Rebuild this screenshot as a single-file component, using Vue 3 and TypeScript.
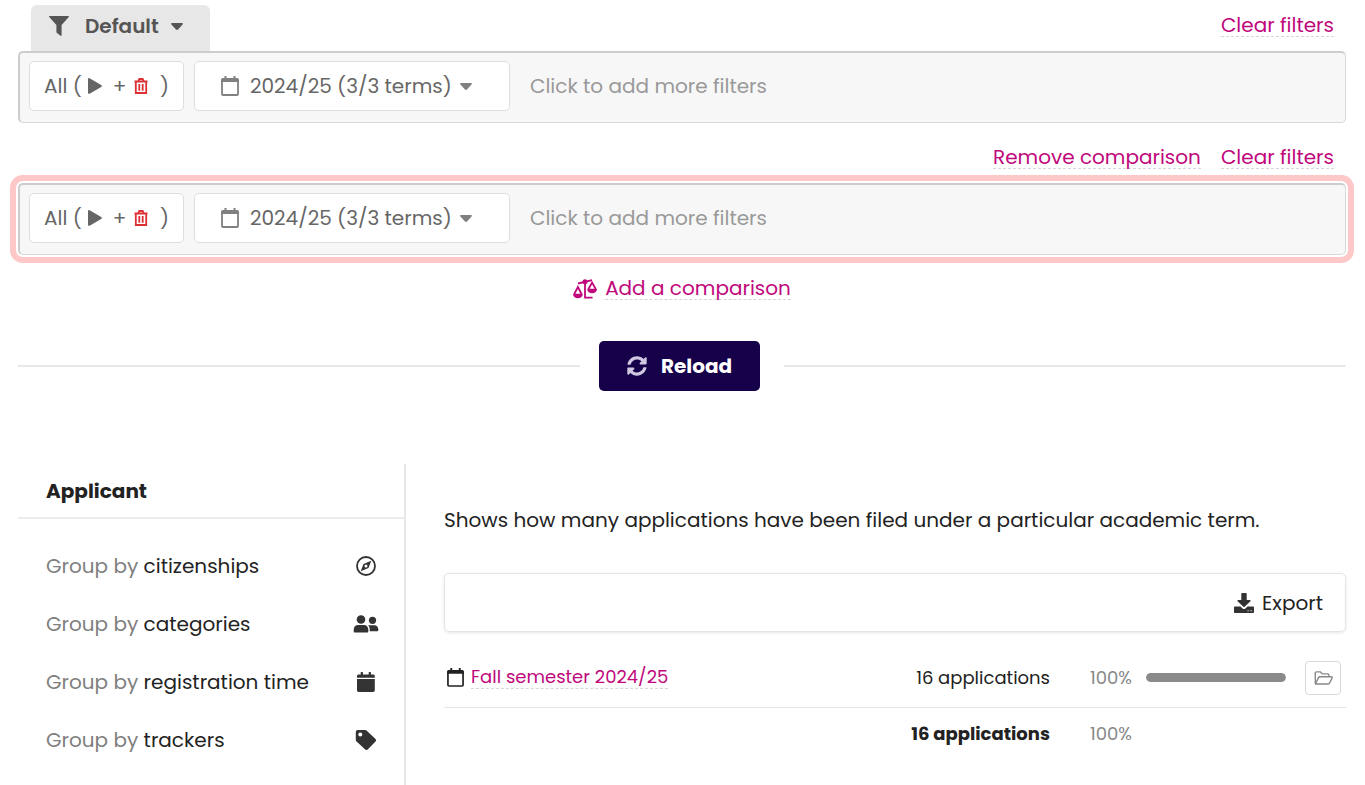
<script setup lang="ts">
import { ref } from 'vue'

interface FilterSet {
  id: string
  named: boolean
  highlighted: boolean
}

interface GroupOption {
  label: string
  icon: 'compass' | 'people' | 'calendar' | 'tag'
}

interface TermRow {
  term: string
  count: number
  share: number
}

const filterSets: FilterSet[] = [
  { id: 'base', named: true, highlighted: false },
  { id: 'comparison', named: false, highlighted: true },
]

const groups: GroupOption[] = [
  { label: 'citizenships', icon: 'compass' },
  { label: 'categories', icon: 'people' },
  { label: 'registration time', icon: 'calendar' },
  { label: 'trackers', icon: 'tag' },
]

const rows: TermRow[] = [{ term: 'Fall semester 2024/25', count: 16, share: 100 }]
const total = rows.reduce((sum, row) => sum + row.count, 0)
const terms = ref('2024/25 (3/3 terms)')
</script>

<template>
  <main class="page">
    <section
      v-for="set in filterSets"
      :key="set.id"
      class="filter-set"
    >
      <header class="filter-head">
        <button v-if="set.named" type="button" class="tab">
          <svg class="funnel" viewBox="0 0 20 20" aria-hidden="true">
            <path d="M.6 0h18.8c.6 0 .8.6.4 1L12.600 9v10.200c0 .7-.5 1-1 .6l-3.600-2.700c-.4-.3-.6-.6-.6-1.100V9L.2 1C-.2.6 0 0 .6 0z" />
          </svg>
          <span>Default</span>
          <svg class="caret" viewBox="0 0 12 7" aria-hidden="true"><path d="M1 0h10c.9 0 1.200.9.600 1.500L7 6.500c-.6.6-1.400.6-2 0L.4 1.500C-.2.9.1 0 1 0z" /></svg>
        </button>
        <nav class="head-links">
          <a v-if="!set.named" href="#" class="link">Remove comparison</a>
          <a href="#" class="link">Clear filters</a>
        </nav>
      </header>

      <div class="filter-bar" :class="{ highlighted: set.highlighted }">
        <button type="button" class="chip all-chip">
          <span>All (</span>
          <svg class="play" viewBox="0 0 14 16" aria-hidden="true"><path d="M0 1.200C0 .3.8-.2 1.600.2l11.600 6.700c.9.500.9 1.700 0 2.200L1.600 15.800C.8 16.200 0 15.700 0 14.800z" /></svg>
          <span class="plus">+</span>
          <svg class="trash" viewBox="0 0 14 16" aria-hidden="true">
            <path d="M.5 3.500h13M4.300 3.200 5.300 1h3.400l1 2.200M1.800 3.500V15h10.400V3.500M5.300 6v6.700M8.700 6v6.700" />
          </svg>
          <span>)</span>
        </button>
        <label class="chip term-chip">
          <svg class="cal-outline" viewBox="0 0 18 20" aria-hidden="true">
            <rect x="1" y="3" width="16" height="16" rx="1" class="stroke" />
            <path d="M.2 4.500C.2 3 1 2.200 2.200 2.200h13.600c1.200 0 2 .8 2 2.300V6H.2zM3.500 0h2v3h-2zM12.500 0h2v3h-2z" />
          </svg>
          <select v-model="terms" aria-label="Academic year">
            <option>2024/25 (3/3 terms)</option>
          </select>
          <svg class="caret" viewBox="0 0 12 7" aria-hidden="true"><path d="M1 0h10c.9 0 1.200.9.600 1.500L7 6.500c-.6.6-1.400.6-2 0L.4 1.500C-.2.9.1 0 1 0z" /></svg>
        </label>
        <input class="add-filter" type="text" aria-label="Add filter" placeholder="Click to add more filters" />
      </div>
    </section>

    <div class="add-row">
      <a href="#" class="add-link">
        <svg class="scales" viewBox="0 0 24 20" aria-hidden="true">
          <path d="M5 4.500 19 1.200M12 3V18.700H19.500M1.300 15 4.900 8 8.500 15M15.500 10 19.100 3.500 22.700 10" class="stroke" />
          <circle cx="12" cy="2.700" r="2.500" />
          <path d="M0 14.800h9.800c0 2.900-2 4.500-4.900 4.500S0 17.700 0 14.800zM14.200 9.800h9.800c0 2.900-2 4.500-4.900 4.500s-4.900-1.600-4.900-4.500z" />
        </svg>
        <span class="link">Add a comparison</span>
      </a>
    </div>

    <div class="reload-row">
      <hr />
      <button type="button" class="reload">
        <svg viewBox="0 0 512 512" aria-hidden="true">
          <path d="M370.700 133.300C339.500 104 298.900 88 255.800 88c-77.500.1-144.300 53.200-162.800 126.900-1.300 5.400-6.100 9.100-11.700 9.100H24.100c-7.500 0-13.200-6.800-11.800-14.200C33.900 94.900 134.800 8 256 8c66.400 0 126.800 26.100 171.300 68.700L463 41c15.100-15.100 41-4.400 41 17v134c0 13.300-10.700 24-24 24H346c-21.400 0-32.100-25.900-17-41zM32 296h134c21.400 0 32.100 25.900 17 41l-41.800 41.800c31.300 29.300 71.800 45.300 114.900 45.300 77.400-.1 144.300-53.100 162.800-126.800 1.300-5.400 6.100-9.100 11.700-9.100h57.300c7.500 0 13.200 6.800 11.800 14.200C478.100 417.100 377.200 504 256 504c-66.400 0-126.800-26.100-171.300-68.700L49 471c-15.100 15.100-41 4.400-41-17V320c0-13.300 10.700-24 24-24z" />
        </svg>
        <span>Reload</span>
      </button>
      <hr />
    </div>

    <div class="report">
      <aside class="sidebar">
        <h2>Applicant</h2>
        <ul>
          <li v-for="group in groups" :key="group.label">
            <a href="#" class="group">
              <span>Group by <b>{{ group.label }}</b></span>
              <svg v-if="group.icon === 'compass'" viewBox="0 0 26 20" aria-hidden="true">
                <circle cx="13" cy="10" r="9" class="ring" />
                <path fill-rule="evenodd" d="M18.300 4.700 15.500 12 7.700 15.300 10.500 8zM13 8.500a1.500 1.500 0 1 0 0 3 1.500 1.500 0 0 0 0-3z" />
              </svg>
              <svg v-else-if="group.icon === 'people'" viewBox="0 0 26 20" aria-hidden="true">
                <circle cx="8" cy="5.500" r="4.300" />
                <circle cx="19.500" cy="6.300" r="3.600" />
                <path d="M5 11h6c2.400 0 4.300 2 4.300 4.500v1.800c0 .8-.5 1.200-1.300 1.200H2c-.8 0-1.300-.4-1.300-1.200v-1.800C.7 13 2.600 11 5 11zM15 11.300h6.500c2.300 0 3.800 1.800 3.800 4v.7c0 .8-.5 1.300-1.300 1.300h-7.300v-2c0-1.600-.6-3-1.700-4z" />
              </svg>
              <svg v-else-if="group.icon === 'calendar'" viewBox="0 0 26 20" aria-hidden="true">
                <path d="M4 5.800V4.200c0-1 .7-1.700 1.700-1.700h2V.5c0-.3.200-.5.500-.5h1.200c.3 0 .5.200.5.500v2h5.800v-2c0-.3.200-.5.500-.5h1.200c.3 0 .5.200.5.500v2h2.200c1 0 1.700.7 1.700 1.700v1.600zM4 7h17.800v11.300c0 1-.7 1.700-1.700 1.700H5.700c-1 0-1.700-.7-1.700-1.700z" />
              </svg>
              <svg v-else viewBox="0 0 26 20" aria-hidden="true">
                <path fill-rule="evenodd" d="M2.800 1.900C2.800.8 3.600 0 4.700 0h7.500c.5 0 1 .2 1.300.5l9 8.500c.7.700.7 1.800 0 2.500l-7.800 8c-.7.700-1.800.7-2.500 0L3.300 11.200c-.3-.3-.5-.8-.5-1.300zM7.300 2.500a2 2 0 1 0 0 4 2 2 0 0 0 0-4z" />
              </svg>
            </a>
          </li>
        </ul>
      </aside>

      <section class="results">
        <p>Shows how many applications have been filed under a particular academic term.</p>
        <div class="toolbar">
          <button type="button" class="export">
            <svg viewBox="0 0 20 20" aria-hidden="true">
              <path d="M8 0h4c.4 0 .7.300.7.700V7h3.200c.7 0 1 .800.500 1.300l-5.800 5.500c-.3.300-.9.300-1.200 0L3.600 8.300C3.100 7.800 3.400 7 4.100 7h3.200V.7c0-.4.300-.7.700-.7z" />
              <path fill-rule="evenodd" d="M1 13.500h5.500l2 1.900c.8.800 2.200.8 3 0l2-1.900H19c.6 0 1 .4 1 1V19c0 .6-.4 1-1 1H1c-.6 0-1-.4-1-1v-4.500c0-.6.4-1 1-1zM13.500 17.300v.9h1.200v-.9zM16.500 17.300v.9h1.200v-.9z" />
            </svg>
            <span>Export</span>
          </button>
        </div>

        <table>
          <tbody>
            <tr v-for="row in rows" :key="row.term">
              <td class="name">
                <span class="term">
                  <svg class="cal-outline" viewBox="0 0 18 20" aria-hidden="true">
                    <rect x="1" y="3" width="16" height="16" rx="1" class="stroke" />
                    <path d="M.2 4.500C.2 3 1 2.200 2.200 2.200h13.600c1.200 0 2 .8 2 2.300V6H.2zM3.500 0h2v3h-2zM12.500 0h2v3h-2z" />
                  </svg>
                  <a href="#" class="link">{{ row.term }}</a>
                </span>
              </td>
              <td class="count">{{ row.count }} applications</td>
              <td class="share">{{ row.share }}%</td>
              <td class="bar">
                <div class="track"><div class="fill" :style="{ width: row.share + '%' }"></div></div>
              </td>
              <td class="open">
                <button type="button" aria-label="Open applications">
                  <svg viewBox="0 0 19 14" aria-hidden="true">
                    <path d="M1.300 12.500V2c0-.7.400-1.100 1.100-1.100h4l2 2h5.400c.7 0 1.100.4 1.100 1.100v1.700M1.500 12.800 4.500 6.600c.3-.6.700-.8 1.300-.8h11.500c.8 0 1.100.6.800 1.200l-2.500 5c-.3.700-.8 1-1.500 1H2c-.4 0-.7-.1-.7-.5z" />
                  </svg>
                </button>
              </td>
            </tr>
          </tbody>
          <tfoot>
            <tr>
              <td></td>
              <td class="count">{{ total }} applications</td>
              <td class="share">100%</td>
              <td></td>
              <td></td>
            </tr>
          </tfoot>
        </table>
      </section>
    </div>
  </main>
</template>

<style>
body {
  margin: 0;
  background: #fff;
}
</style>

<style scoped>
* {
  box-sizing: border-box;
}

.page {
  display: flex;
  flex-direction: column;
  min-height: 100vh;
  padding: 0 19px 0 18px;
  font-family: Poppins, Inter, "Open Sans", sans-serif;
  font-size: 20px;
  line-height: 30px;
  color: #222;
}

button,
input,
select {
  margin: 0;
  padding: 0;
  border: 0;
  background: none;
  font: inherit;
  color: inherit;
}

button,
select {
  cursor: pointer;
}

svg {
  display: block;
  flex: none;
  fill: currentColor;
}

a {
  color: inherit;
  text-decoration: none;
}

.stroke {
  fill: none;
  stroke: currentColor;
  stroke-width: 1.8;
}

.link {
  color: #c0087c;
  line-height: 22px;
  border-bottom: 1px dashed #d5d5dc;
}

.filter-head {
  display: flex;
  justify-content: space-between;
  align-items: flex-end;
  height: 51px;
  padding: 0 12px 0 13px;
}

.filter-set + .filter-set .filter-head {
  height: 60px;
}

.tab {
  display: flex;
  align-items: center;
  height: 46px;
  padding: 0 27px 4px 18px;
  border-radius: 6px 6px 0 0;
  background: #e7e7e7;
  color: #555;
  font-weight: 600;
}

.funnel {
  width: 20px;
  height: 20px;
  margin-right: 16px;
}

.caret {
  width: 12px;
  height: 7px;
  margin-left: 12px;
}

.head-links {
  display: flex;
  gap: 20px;
  margin-left: auto;
  padding-bottom: 14px;
}

.filter-bar {
  display: flex;
  align-items: flex-start;
  height: 72px;
  padding: 8px 9px;
  border: 1px solid #d9d9d9;
  border-top: 2px solid #cdcdcd;
  border-left: 2px solid #cdcdcd;
  border-radius: 5px;
  background: #f7f7f7;
  color: #666;
}

.highlighted {
  box-shadow: 0 0 0 2px #fff, 0 0 0 8px #ffc8c8;
}

.chip {
  display: flex;
  align-items: center;
  flex: none;
  height: 50px;
  border: 1px solid #dedede;
  border-radius: 5px;
  background: #fff;
}

.all-chip {
  width: 155px;
  margin-right: 10px;
  padding: 0 14px;
}

.play {
  width: 14px;
  height: 16px;
  margin-left: 6px;
}

.plus {
  margin: 0 8px 0 11px;
}

.trash {
  width: 14px;
  height: 16px;
  margin-right: auto;
  fill: none;
  stroke: #dc3035;
  stroke-width: 1.8;
}

.term-chip {
  width: 316px;
  padding: 0 26px;
}

.cal-outline {
  width: 18px;
  height: 20px;
}

.term-chip select {
  margin-left: 11px;
  appearance: none;
}

.term-chip .cal-outline,
.term-chip .caret {
  color: #808080;
}

.term-chip .caret {
  margin-left: 8px;
}

.add-filter {
  flex: 1;
  min-width: 0;
  height: 50px;
  margin-left: 20px;
  outline: 0;
}

.add-filter::placeholder {
  color: #999;
  opacity: 1;
}

.add-row {
  display: flex;
  justify-content: center;
  margin-top: 22px;
}

.add-link {
  display: flex;
  align-items: center;
  gap: 8px;
  color: #c0087c;
}

.scales {
  width: 24px;
  height: 20px;
}

.reload-row {
  display: flex;
  align-items: center;
  margin-top: 41px;
}

.reload-row hr {
  flex: 1;
  height: 2px;
  margin: 0;
  border: 0;
  background: #e8e8e8;
}

.reload {
  display: flex;
  align-items: center;
  justify-content: center;
  gap: 14px;
  width: 161px;
  height: 50px;
  margin: 0 24px 0 19px;
  border-radius: 5px;
  background: #16004a;
  color: #fff;
  font-weight: 700;
}

.reload svg {
  width: 20px;
  height: 20px;
  color: #cfc8e0;
}

.report {
  display: flex;
  flex: 1;
  margin-top: 73px;
}

.sidebar {
  flex: none;
  width: 388px;
  border-right: 2px solid #e8e8e8;
}

.sidebar h2 {
  margin: 0;
  padding: 12px 28px 11px;
  border-bottom: 2px solid #ececec;
  font-size: 20px;
  line-height: 30px;
  font-weight: 700;
}

.sidebar ul {
  margin: 0;
  padding: 18px 0 0;
  list-style: none;
}

.group {
  display: flex;
  align-items: center;
  justify-content: space-between;
  height: 58px;
  padding: 0 25px 0 28px;
  color: #808080;
}

.group b {
  color: #222;
  font-weight: 400;
}

.group svg {
  width: 26px;
  height: 20px;
  color: #333;
}

.ring {
  fill: none;
  stroke: currentColor;
  stroke-width: 1.8;
}

.results {
  flex: 1;
  min-width: 0;
  padding-left: 38px;
}

.results p {
  margin: 41px 0 38px;
}

.toolbar {
  display: flex;
  justify-content: flex-end;
  height: 59px;
  padding: 0 22px;
  border: 1px solid #e4e4e4;
  border-radius: 5px;
  box-shadow: 0 1px 3px #0000001a;
}

.export {
  display: flex;
  align-items: center;
  gap: 8px;
}

.export svg {
  width: 20px;
  height: 20px;
  color: #333;
}

table {
  width: 100%;
  margin-top: 17px;
  border-collapse: collapse;
  font-size: 18px;
}

td {
  padding: 0;
  white-space: nowrap;
}

tbody td {
  height: 58px;
  border-bottom: 1px solid #e4e4e4;
}

tfoot td {
  height: 54px;
}

.term {
  display: flex;
  align-items: center;
  gap: 7px;
  padding-left: 3px;
}

.term .cal-outline {
  width: 17px;
  height: 19px;
}

.count {
  width: 160px;
  text-align: right;
}

tfoot .count {
  font-weight: 700;
}

.share {
  width: 96px;
  padding-left: 40px;
  color: #888;
}

.bar {
  width: 140px;
}

.track {
  height: 9px;
  border-radius: 5px;
  background: #eee;
  overflow: hidden;
}

.fill {
  height: 100%;
  border-radius: 5px;
  background: #8a8a8a;
}

.open {
  width: 60px;
  padding-left: 19px;
}

.open button {
  display: flex;
  align-items: center;
  justify-content: center;
  width: 36px;
  height: 34px;
  border: 1px solid #d8d8d8;
  border-radius: 4px;
  background: #fff;
  color: #888;
}

.open svg {
  width: 19px;
  height: 14px;
  fill: none;
  stroke: currentColor;
  stroke-width: 1.4;
}
</style>
